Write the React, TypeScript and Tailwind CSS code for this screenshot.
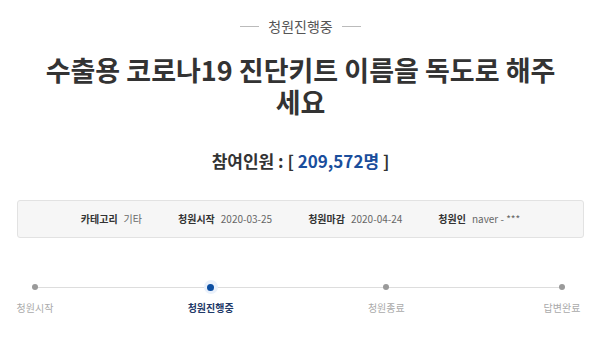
import React from "react";

const font = { fontFamily: '"Noto Sans CJK KR", "Noto Sans", sans-serif' };

function Step({ label, active }: { label: string; active?: boolean }) {
  return (
    <div className="relative z-10 flex w-[48px] flex-col items-center">
      <div className="flex h-[14px] w-[14px] items-center justify-center">
        {active ? (
          <div className="flex h-[14px] w-[14px] items-center justify-center rounded-full bg-[#eaf1fb]">
            <div className="h-[7px] w-[7px] rounded-full bg-[#0b4ea2]" />
          </div>
        ) : (
          <div className="h-[6px] w-[6px] rounded-full bg-[#9a9a9a]" />
        )}
      </div>
      <div
        className={
          active
            ? "mt-[7px] whitespace-nowrap text-[10px] font-bold leading-[14px] text-[#1f3a68]"
            : "mt-[7px] whitespace-nowrap text-[10px] leading-[14px] text-[#aaaaaa]"
        }
      >
        {label}
      </div>
    </div>
  );
}

export default function App() {
  return (
    <div className="h-[350px] w-[601px] overflow-hidden bg-white" style={font}>
      <div className="flex flex-col items-center pt-[17px]">
        <div className="flex items-center gap-[9px]">
          <div className="h-px w-[19px] bg-[#bbbbbb]" />
          <div className="text-[14px] leading-[19px] text-[#555555]">청원진행중</div>
          <div className="h-px w-[19px] bg-[#bbbbbb]" />
        </div>
        <h1 className="mt-[18px] w-[530px] text-center text-[27px] font-bold leading-[32px] text-[#333333]">
          수출용 코로나19 진단키트 이름을 독도로 해주세요
        </h1>
        <div className="mt-[31px] text-[17px] font-bold leading-[24px] text-[#333333]">
          참여인원 : [ <span className="text-[#1a4e9c]">209,572명</span> ]
        </div>
      </div>
      <div className="mx-[17px] mt-[27px] flex h-[38px] items-center justify-center gap-[36px] rounded-[3px] border border-[#e2e2e2] bg-[#f6f6f6] text-[10px] leading-[14px]">
        <div className="flex items-center gap-[6px]">
          <span className="font-bold text-[#333333]">카테고리</span>
          <span className="text-[#666666]">기타</span>
        </div>
        <div className="flex items-center gap-[6px]">
          <span className="font-bold text-[#333333]">청원시작</span>
          <span className="text-[#666666]">2020-03-25</span>
        </div>
        <div className="flex items-center gap-[6px]">
          <span className="font-bold text-[#333333]">청원마감</span>
          <span className="text-[#666666]">2020-04-24</span>
        </div>
        <div className="flex items-center gap-[6px]">
          <span className="font-bold text-[#333333]">청원인</span>
          <span className="text-[#666666]">naver - ***</span>
        </div>
      </div>
      <div className="mt-[42px] pl-[11px] pr-[15px]">
        <div className="relative flex justify-between">
          <div className="absolute left-[24px] right-[24px] top-[6.5px] h-px bg-[#dddddd]" />
          <Step label="청원시작" />
          <Step label="청원진행중" active />
          <Step label="청원종료" />
          <Step label="답변완료" />
        </div>
      </div>
    </div>
  );
}
